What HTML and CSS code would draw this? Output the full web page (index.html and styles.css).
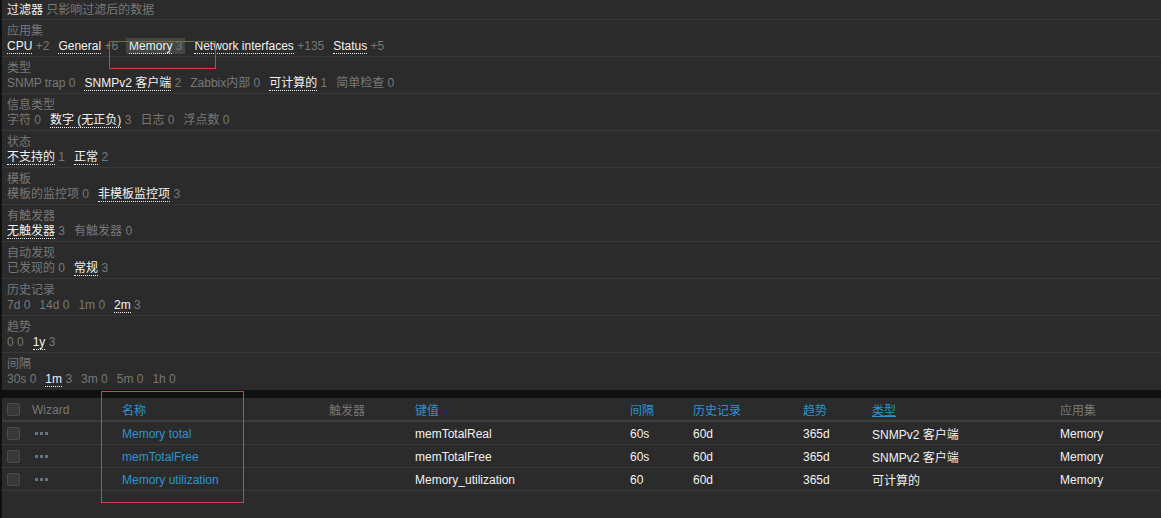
FILE: index.html
```html
<!DOCTYPE html>
<html lang="zh-CN">
<head>
    <meta charset="UTF-8">
    <title>监控项</title>
    <link rel="stylesheet" href="styles.css">
</head>
<body>
    <div class="page">
        <!-- 过滤器 -->
        <div class="filter">
            <div class="filter-title"><span class="title-main">过滤器</span> <span class="muted">只影响过滤后的数据</span></div>

            <div class="subfilter">
                <div class="sub-label">应用集</div>
                <div class="sub-values">
                    <span class="sub"><a class="link">CPU</a> <span class="cnt">+2</span></span>
                    <span class="sub"><a class="link">General</a> <span class="cnt">+6</span></span>
                    <span class="sub selected"><a class="link">Memory</a> <span class="cnt">3</span></span>
                    <span class="sub"><a class="link">Network interfaces</a> <span class="cnt">+135</span></span>
                    <span class="sub"><a class="link">Status</a> <span class="cnt">+5</span></span>
                </div>
            </div>

            <div class="subfilter">
                <div class="sub-label">类型</div>
                <div class="sub-values">
                    <span class="sub off">SNMP trap 0</span>
                    <span class="sub"><a class="link">SNMPv2 客户端</a> <span class="cnt">2</span></span>
                    <span class="sub off">Zabbix内部 0</span>
                    <span class="sub"><a class="link">可计算的</a> <span class="cnt">1</span></span>
                    <span class="sub off">简单检查 0</span>
                </div>
            </div>

            <div class="subfilter">
                <div class="sub-label">信息类型</div>
                <div class="sub-values">
                    <span class="sub off">字符 0</span>
                    <span class="sub"><a class="link">数字 (无正负)</a> <span class="cnt">3</span></span>
                    <span class="sub off">日志 0</span>
                    <span class="sub off">浮点数 0</span>
                </div>
            </div>

            <div class="subfilter">
                <div class="sub-label">状态</div>
                <div class="sub-values">
                    <span class="sub"><a class="link">不支持的</a> <span class="cnt">1</span></span>
                    <span class="sub"><a class="link">正常</a> <span class="cnt">2</span></span>
                </div>
            </div>

            <div class="subfilter">
                <div class="sub-label">模板</div>
                <div class="sub-values">
                    <span class="sub off">模板的监控项 0</span>
                    <span class="sub"><a class="link">非模板监控项</a> <span class="cnt">3</span></span>
                </div>
            </div>

            <div class="subfilter">
                <div class="sub-label">有触发器</div>
                <div class="sub-values">
                    <span class="sub"><a class="link">无触发器</a> <span class="cnt">3</span></span>
                    <span class="sub off">有触发器 0</span>
                </div>
            </div>

            <div class="subfilter">
                <div class="sub-label">自动发现</div>
                <div class="sub-values">
                    <span class="sub off">已发现的 0</span>
                    <span class="sub"><a class="link">常规</a> <span class="cnt">3</span></span>
                </div>
            </div>

            <div class="subfilter">
                <div class="sub-label">历史记录</div>
                <div class="sub-values">
                    <span class="sub off">7d 0</span>
                    <span class="sub off">14d 0</span>
                    <span class="sub off">1m 0</span>
                    <span class="sub"><a class="link">2m</a> <span class="cnt">3</span></span>
                </div>
            </div>

            <div class="subfilter">
                <div class="sub-label">趋势</div>
                <div class="sub-values">
                    <span class="sub off">0 0</span>
                    <span class="sub"><a class="link">1y</a> <span class="cnt">3</span></span>
                </div>
            </div>

            <div class="subfilter">
                <div class="sub-label">间隔</div>
                <div class="sub-values">
                    <span class="sub off">30s 0</span>
                    <span class="sub"><a class="link">1m</a> <span class="cnt">3</span></span>
                    <span class="sub off">3m 0</span>
                    <span class="sub off">5m 0</span>
                    <span class="sub off">1h 0</span>
                </div>
            </div>
        </div>

        <!-- 监控项列表 -->
        <div class="list">
            <table class="items">
                <colgroup>
                    <col class="c-check"><col class="c-wizard"><col class="c-name"><col class="c-trig">
                    <col class="c-key"><col class="c-int"><col class="c-hist"><col class="c-trend">
                    <col class="c-type"><col class="c-app">
                </colgroup>
                <thead>
                    <tr>
                        <th><span class="checkbox"></span></th>
                        <th class="muted">Wizard</th>
                        <th><a class="sort">名称</a></th>
                        <th class="muted">触发器</th>
                        <th><a class="sort">键值</a></th>
                        <th><a class="sort">间隔</a></th>
                        <th><a class="sort">历史记录</a></th>
                        <th><a class="sort">趋势</a></th>
                        <th><a class="sort sorted">类型</a></th>
                        <th class="muted">应用集</th>
                    </tr>
                </thead>
                <tbody>
                    <tr>
                        <td><span class="checkbox"></span></td>
                        <td><span class="dots"><i></i><i></i><i></i></span></td>
                        <td><a class="name">Memory total</a></td>
                        <td></td>
                        <td>memTotalReal</td>
                        <td>60s</td>
                        <td>60d</td>
                        <td>365d</td>
                        <td>SNMPv2 客户端</td>
                        <td>Memory</td>
                    </tr>
                    <tr>
                        <td><span class="checkbox"></span></td>
                        <td><span class="dots"><i></i><i></i><i></i></span></td>
                        <td><a class="name">memTotalFree</a></td>
                        <td></td>
                        <td>memTotalFree</td>
                        <td>60s</td>
                        <td>60d</td>
                        <td>365d</td>
                        <td>SNMPv2 客户端</td>
                        <td>Memory</td>
                    </tr>
                    <tr>
                        <td><span class="checkbox"></span></td>
                        <td><span class="dots"><i></i><i></i><i></i></span></td>
                        <td><a class="name">Memory utilization</a></td>
                        <td></td>
                        <td>Memory_utilization</td>
                        <td>60</td>
                        <td>60d</td>
                        <td>365d</td>
                        <td>可计算的</td>
                        <td>Memory</td>
                    </tr>
                </tbody>
            </table>
        </div>
    </div>

    <!-- 截图上的红框标注 -->
    <div class="mark mark-memory"></div>
    <div class="mark mark-name"></div>
</body>
</html>
```

FILE: styles.css
```css
/* 기본 */
body {
    margin: 0;
    background-color: #0e1012;
    font-family: "Liberation Sans", Arial, "Noto Sans CJK SC", sans-serif;
    font-size: 12px;
    color: #f2f2f2;
}

.page {
    margin-left: 2px;
    min-height: 100vh;
    display: flex;
    flex-direction: column;
    gap: 8px;
}

.muted {
    color: #787878;
}

/* 过滤器 */
.filter {
    background-color: #2b2b2b;
}

.filter-title {
    padding: 2px 5px 1px;
    line-height: 16px;
    border-bottom: 1px solid #383838;
}

.title-main {
    color: #f2f2f2;
}

.subfilter {
    padding: 4px 5px 2px;
    border-bottom: 1px solid #383838;
}

.subfilter:last-child {
    border-bottom: none;
    padding-bottom: 3px;
}

.sub-label {
    line-height: 14px;
    color: #787878;
}

.sub-values {
    display: flex;
    gap: 9px;
    line-height: 16px;
    white-space: nowrap;
}

.sub .link {
    color: #f2f2f2;
    border-bottom: 1px dotted #f2f2f2;
}

.sub .cnt,
.sub.off {
    color: #787878;
}

.sub.selected {
    background-color: #454545;
    padding: 0 3px;
    margin-left: -1px;
}

/* 监控项列表 */
.list {
    flex: 1;
    background-color: #2b2b2b;
}

.items {
    width: 100%;
    border-collapse: collapse;
    table-layout: fixed;
}

.c-check { width: 25px; }
.c-wizard { width: 90px; }
.c-name { width: 207px; }
.c-trig { width: 86px; }
.c-key { width: 215px; }
.c-int { width: 63px; }
.c-hist { width: 110px; }
.c-trend { width: 69px; }
.c-type { width: 188px; }
.c-app { width: 106px; }

.items th,
.items td {
    height: 21px;
    padding: 1px 5px 0;
    text-align: left;
    font-weight: normal;
    vertical-align: middle;
    white-space: nowrap;
}

.items thead tr {
    border-bottom: 2px solid #3e3e3e;
}

.items tbody tr {
    border-bottom: 1px solid #383838;
}

.sort,
.name {
    color: #2d93cf;
}

.sorted {
    text-decoration: underline;
}

.checkbox {
    display: block;
    width: 11px;
    height: 11px;
    margin-top: -1px;
    border: 1px solid #4b4b4b;
    border-radius: 2px;
    background-color: #383838;
}

.dots {
    display: flex;
    gap: 2px;
    margin-left: 3px;
}

.dots i {
    width: 3px;
    height: 3px;
    background-color: #5e7584;
}

/* 红框标注 */
.mark {
    position: absolute;
    border: 1px solid #e03a3a;
}

.mark-memory {
    left: 109px;
    top: 41px;
    width: 105px;
    height: 26px;
}

.mark-name {
    left: 101px;
    top: 391px;
    width: 141px;
    height: 110px;
    border-color: #c94848;
}
```
